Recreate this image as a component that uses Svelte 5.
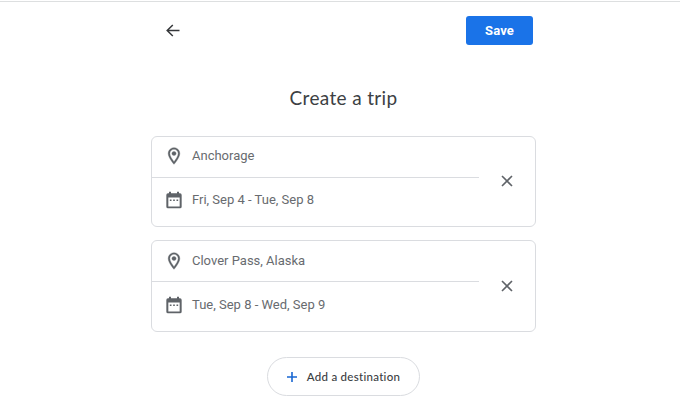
<script>
  const stops = [
    { place: 'Anchorage', dates: 'Fri, Sep 4 - Tue, Sep 8' },
    { place: 'Clover Pass, Alaska', dates: 'Tue, Sep 8 - Wed, Sep 9' }
  ];
</script>

<main>
  <header>
    <button class="back" aria-label="Back">
      <svg width="14" height="14" viewBox="0 0 14 14"><path d="M13.5 6.5H1.200M6.800 1 1.200 6.500 6.800 12" /></svg>
    </button>
    <button class="save">Save</button>
  </header>
  <h1>Create a trip</h1>
  <div class="stops">
    {#each stops as stop}
      <section class="card">
        <div class="fields">
          <div class="row place">
            <svg class="pin" width="20" height="20" viewBox="0 0 24 24"><path d="M12 2C8.13 2 5 5.13 5 9c0 5.25 7 13 7 13s7-7.75 7-13c0-3.87-3.13-7-7-7zM7 9c0-2.76 2.24-5 5-5s5 2.24 5 5c0 2.88-2.88 7.19-5 9.88C9.92 16.21 7 11.85 7 9z" /><circle cx="12" cy="9" r="2.5" /></svg>
            <span>{stop.place}</span>
          </div>
          <div class="row dates">
            <svg width="20" height="20" viewBox="0 0 24 24"><path d="M19.200 4H18V2h-2.400v2H8.400V2H6v2H4.800A2 2 0 0 0 2.800 6v14a2 2 0 0 0 2 2h14.400a2 2 0 0 0 2-2V6a2 2 0 0 0-2-2zm-.4 15.800H5.200V9h13.600zM7 11.500h2v1.800H7zm4 0h2v1.800h-2zm4 0h2v1.800h-2z" /></svg>
            <span>{stop.dates}</span>
          </div>
        </div>
        <button class="remove" aria-label="Remove">
          <svg width="12" height="12" viewBox="0 0 12 12"><path d="m1 1 10 10M11 1 1 11" /></svg>
        </button>
      </section>
    {/each}
  </div>
  <button class="add">
    <svg width="10" height="10" viewBox="0 0 10 10"><path d="M5 0v10M0 5h10" /></svg>
    <span>Add a destination</span>
  </button>
</main>

<style>
  :global(body) {
    background: #fff;
  }
  main {
    box-sizing: border-box;
    height: 404px;
    margin-top: 1px;
    border-top: 1px solid #dddfe0;
    overflow: hidden;
    display: flex;
    flex-direction: column;
    align-items: center;
    font-family: Roboto, sans-serif;
    color: #686b6f;
  }
  button {
    border: 0;
    padding: 0;
    background: none;
    font-family: inherit;
    display: flex;
    align-items: center;
    justify-content: center;
  }
  header {
    box-sizing: border-box;
    width: 385px;
    margin-left: 7px;
    padding: 14px 3px 0 15px;
    display: flex;
    justify-content: space-between;
  }
  .back {
    height: 29px;
  }
  .back path {
    fill: none;
    stroke: #35373a;
    stroke-width: 1.5;
  }
  .save {
    width: 67px;
    height: 29px;
    border-radius: 3px;
    background: #1a73e8;
    color: #fff;
    font: 700 13px/29px Roboto, sans-serif;
    letter-spacing: 0.1px;
  }
  h1 {
    margin: 38px 0 0 7px;
    height: 29px;
    font: 400 19px/29px Lato, sans-serif;
    font-variant-ligatures: none;
    letter-spacing: 0.35px;
    color: #3c4043;
    white-space: nowrap;
  }
  .stops {
    display: flex;
    flex-direction: column;
    gap: 13px;
    margin: 24px 0 0 7px;
  }
  .card {
    box-sizing: border-box;
    width: 385px;
    height: 91px;
    border: 1px solid #dadce0;
    border-radius: 6px;
    display: flex;
  }
  .fields {
    width: 327px;
  }
  .row {
    box-sizing: border-box;
    display: flex;
    align-items: center;
    gap: 8px;
    padding-left: 12px;
    font-size: 13px;
    fill: #5f6368;
    white-space: nowrap;
  }
  .place {
    height: 41px;
    padding-bottom: 3px;
    border-bottom: 1px solid #dadce0;
  }
  .dates {
    height: 43px;
  }
  .card:last-child {
    height: 92px;
  }
  .card:last-child .place {
    padding-bottom: 1px;
  }
  .card:last-child .dates {
    height: 45px;
  }
  .pin {
    stroke: #5f6368;
    stroke-width: 0.4;
  }
  .remove {
    flex: 1;
    padding: 0 1px 1px 0;
  }
  .remove path {
    stroke: #5f6368;
    stroke-width: 1.6;
  }
  .add {
    box-sizing: border-box;
    width: 153px;
    height: 39px;
    margin: 25px 0 0 7px;
    border: 1px solid #dadce0;
    border-radius: 20px;
    gap: 10px;
    font: 500 11.500px Lato, sans-serif;
    font-variant-ligatures: none;
    letter-spacing: 0.28px;
    color: #3c4043;
    white-space: nowrap;
  }
  .add path {
    stroke: #1967d2;
    stroke-width: 1.6;
  }
</style>
